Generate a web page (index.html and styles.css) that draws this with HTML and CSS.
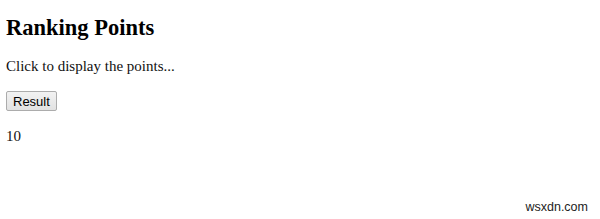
FILE: index.html
```html
<!DOCTYPE html>
<html lang="en">
<head>
    <meta charset="UTF-8">
    <meta name="viewport" content="width=device-width, initial-scale=1.0">
    <title>Ranking Points</title>
    <link rel="stylesheet" href="styles.css">
</head>
<body>
    <h1 class="title">Ranking Points</h1>
    <p class="desc">Click to display the points...</p>
    <button class="resultBtn">Result</button>
    <p class="points">10</p>
    <div class="mark">wsxdn.com</div>
</body>
</html>
```

FILE: styles.css
```css
*{ margin: 0; padding: 0;}
body{ width: 600px; height: 219px; padding: 0 6px; box-sizing: border-box; font-family: "Liberation Serif", "Times New Roman", serif; color: #000; background-color: #fff; position: relative; overflow: hidden;}

.title{ font-size: 22.5px; font-weight: bold; line-height: 26px; padding-top: 15px;}
.desc{ font-size: 15px; line-height: 18px; margin-top: 16px; color: #111;}
.resultBtn{ display: block; margin-top: 16px; height: 20px; padding: 0 6px; font-family: "Liberation Sans", Arial, sans-serif; font-size: 13px; color: #000; background: linear-gradient(#f2f2f2, #e2e2e2); border: 1px solid #acacac; border-radius: 2px;}
.points{ font-size: 15px; line-height: 18px; margin-top: 16px; color: #111;}

.mark{ position: absolute; right: 12px; bottom: 5px; font-family: "Liberation Sans", Arial, sans-serif; font-size: 12.5px; color: #222;}
```
